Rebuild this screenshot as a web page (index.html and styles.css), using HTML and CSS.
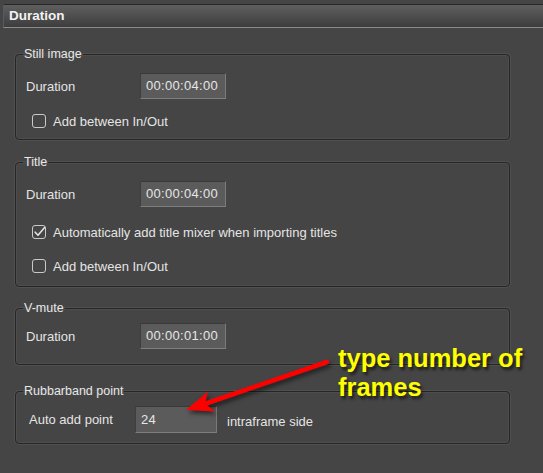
FILE: index.html
```html
<!DOCTYPE html>
<html>
<head>
<meta charset="utf-8">
<link rel="stylesheet" href="styles.css">
</head>
<body>
<div class="page">
  <div class="header">Duration</div>

  <fieldset class="group g-still">
    <legend>Still image</legend>
    <div class="row">
      <span class="label">Duration</span>
      <span class="field">00:00:04:00</span>
    </div>
    <div class="check-row r-still">
      <span class="box"></span>
      <span class="check-text">Add between In/Out</span>
    </div>
  </fieldset>

  <fieldset class="group g-title">
    <legend>Title</legend>
    <div class="row">
      <span class="label">Duration</span>
      <span class="field">00:00:04:00</span>
    </div>
    <div class="check-row r-auto">
      <span class="box"><svg viewBox="0 0 14 14" width="14" height="14"><path d="M3.2 7.2 L6 10.2 L12.6 2.6" fill="none" stroke="#e2e2e2" stroke-width="1.6" stroke-linecap="round" stroke-linejoin="round"/></svg></span>
      <span class="check-text">Automatically add title mixer when importing titles</span>
    </div>
    <div class="check-row r-add">
      <span class="box"></span>
      <span class="check-text">Add between In/Out</span>
    </div>
  </fieldset>

  <fieldset class="group g-vmute">
    <legend>V-mute</legend>
    <div class="row">
      <span class="label">Duration</span>
      <span class="field">00:00:01:00</span>
    </div>
  </fieldset>

  <fieldset class="group g-rubber">
    <legend>Rubbarband point</legend>
    <div class="row row-rubber">
      <span class="label label-rubber">Auto add point</span>
      <span class="field field-rubber">24</span>
      <span class="suffix">intraframe side</span>
    </div>
  </fieldset>

  <svg class="arrow" width="543" height="473" viewBox="0 0 543 473">
    <line x1="327" y1="362" x2="206" y2="403.5" stroke="#ff0000" stroke-width="4.5" stroke-linecap="round"/>
    <polygon points="186,410 208,391.5 205,403.5 215,411.5" fill="#ff0000"/>
  </svg>
  <div class="note">type number of<br>frames</div>
</div>
</body>
</html>
```

FILE: styles.css
```css
html, body {
  margin: 0;
  padding: 0;
  background: #454545;
}

.page {
  position: relative;
  width: 543px;
  height: 473px;
  overflow: hidden;
  font-family: "Liberation Sans", Arial, sans-serif;
  font-size: 13px;
  color: #e4e4e4;
  padding-top: 4px;
  box-sizing: border-box;
}

.header {
  margin-left: 3px;
  height: 22px;
  line-height: 22px;
  border-top: 1px solid #272727;
  border-left: 1px solid #5a5a5a;
  border-bottom: 1px solid #8c8c8c;
  background: linear-gradient(#5f5f5f, #3d3d3d);
  font-weight: bold;
  font-size: 13.5px;
  color: #f2f2f2;
  padding-left: 5px;
  margin-bottom: 19px;
}

.group {
  margin: 0 33px 0 15px;
  padding: 0;
  border: 1px solid #262626;
  border-radius: 4px;
  box-shadow: 0 0 0 1px #505050, inset 0 0 0 1px #4d4d4d;
  min-width: 0;
}

.group legend {
  margin-left: 7px;
  padding: 0 1px;
  font-size: 12.5px;
  line-height: 14px;
  color: #e8e8e8;
}

.g-still { padding: 12px 0 10px 0; margin-bottom: 15px; }
.g-title { padding: 12px 0 12px 0; margin-bottom: 14px; }
.g-vmute { padding: 8px 0 15px 0; margin-bottom: 19px; }
.g-rubber { padding: 8px 0 10px 0; }

.row {
  display: flex;
  align-items: center;
  height: 26px;
  padding-left: 10px;
}

.label {
  width: 114px;
  flex: none;
}

.field {
  box-sizing: border-box;
  width: 86px;
  height: 26px;
  line-height: 24px;
  padding-left: 5px;
  background: #5b5b5b;
  border: 1px solid;
  border-color: #3a3a3a #7a7a7a #7e7e7e #3e3e3e;
  color: #e6e6e6;
  font-size: 13px;
  letter-spacing: 0.3px;
}

.row-rubber {
  height: 27px;
  padding-left: 13px;
}

.label-rubber {
  width: 106px;
}

.field-rubber {
  width: 82px;
  height: 27px;
  line-height: 25px;
}

.suffix {
  margin-left: 10px;
  padding-top: 4px;
}

.check-row {
  display: flex;
  align-items: center;
  height: 16px;
  padding-left: 16px;
}

.r-still { margin-top: 14px; }
.r-auto { margin-top: 17px; }
.r-add { margin-top: 18px; }

.box {
  box-sizing: border-box;
  width: 14px;
  height: 14px;
  border: 1px solid #c9c9c9;
  border-radius: 3px;
  flex: none;
  position: relative;
  margin-right: 7px;
}

.box svg {
  position: absolute;
  left: -1px;
  top: -1px;
}

.arrow {
  position: absolute;
  left: 0;
  top: 0;
  filter: drop-shadow(2px 3px 2px rgba(0, 0, 0, 0.55));
}

.note {
  position: absolute;
  left: 338px;
  top: 344px;
  font-weight: bold;
  font-size: 25.5px;
  line-height: 29px;
  color: #ffff00;
  text-shadow: 2px 3px 3px rgba(0, 0, 0, 0.6);
  white-space: nowrap;
}
```
